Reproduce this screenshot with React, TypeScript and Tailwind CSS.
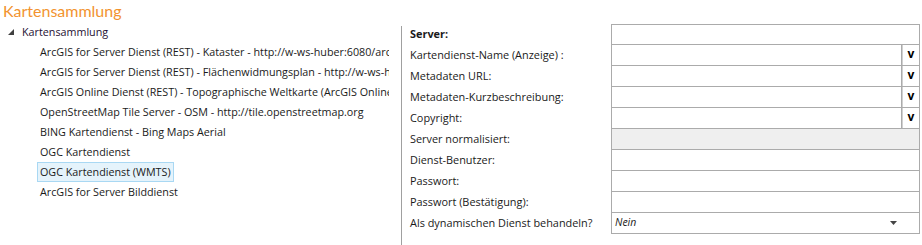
const services = [
  "ArcGIS for Server Dienst (REST) - Kataster - http://w-ws-huber:6080/arcgis/rest/services/Kataster/MapServer",
  "ArcGIS for Server Dienst (REST) - Flächenwidmungsplan - http://w-ws-huber:6080/arcgis/rest/services",
  "ArcGIS Online Dienst (REST) - Topographische Weltkarte (ArcGIS Online)",
  "OpenStreetMap Tile Server - OSM - http://tile.openstreetmap.org",
  "BING Kartendienst - Bing Maps Aerial",
  "OGC Kartendienst",
  "OGC Kartendienst (WMTS)",
  "ArcGIS for Server Bilddienst",
];

type Field = { label: string; kind: "text" | "combo" | "readonly" | "select"; bold?: boolean; value?: string };

const fields: Field[] = [
  { label: "Server:", kind: "text", bold: true },
  { label: "Kartendienst-Name (Anzeige) :", kind: "combo" },
  { label: "Metadaten URL:", kind: "combo" },
  { label: "Metadaten-Kurzbeschreibung:", kind: "combo" },
  { label: "Copyright:", kind: "combo" },
  { label: "Server normalisiert:", kind: "readonly" },
  { label: "Dienst-Benutzer:", kind: "text" },
  { label: "Passwort:", kind: "text" },
  { label: "Passwort (Bestätigung):", kind: "text" },
  { label: "Als dynamischen Dienst behandeln?", kind: "select", value: "Nein" },
];

const FieldInput = ({ field, first }: { field: Field; first: boolean }) => {
  const edge = `h-[21px] border-x border-b border-[#ababab] ${first ? "border-t" : ""}`;
  if (field.kind === "combo") {
    return (
      <div className={`${edge} flex w-[309px]`}>
        <div className="flex-1 border-r border-[#ababab] bg-white" />
        <div className="w-[17px] border-l border-[#d0d0d0] bg-white flex items-center justify-center text-[12px] font-bold text-black leading-none pb-[2px]">
          v
        </div>
      </div>
    );
  }
  if (field.kind === "select") {
    return (
      <div className={`${edge} flex w-[309px] items-center pl-[3px] pr-[24px] bg-white`}>
        <span className="flex-1 italic text-[10.5px] text-[#1a1a1a]">{field.value}</span>
        <svg width="7" height="4" viewBox="0 0 7 4" className="-mr-[2px]">
          <polygon points="0,0 7,0 3.5,4" fill="#444" />
        </svg>
      </div>
    );
  }
  return <div className={`${edge} w-[309px] ${field.kind === "readonly" ? "bg-[#efefef]" : "bg-white"}`} />;
};

export default function App() {
  return (
    <div
      className="w-[922px] h-[245px] bg-white overflow-hidden text-[#1a1a1a]"
      style={{ fontFamily: "'Segoe UI', 'Open Sans', sans-serif" }}
    >
      <div
        className="h-[22px] pl-[3px] text-[16px] leading-[22px] text-[#f2932f]"
        style={{ fontFamily: "Lato, 'Open Sans', sans-serif" }}
      >
        Kartensammlung
      </div>
      <div className="flex">
        {/* tree */}
        <div className="w-[389px] overflow-hidden text-[10.75px]">
          <div className="h-[20px] flex items-center">
            <svg width="6" height="6" viewBox="0 0 6 6" className="ml-[8px] mr-[8px]">
              <polygon points="6,0 6,6 0,6" fill="#404040" />
            </svg>
            <span className="text-[#1e0f32]">Kartensammlung</span>
          </div>
          {services.map((s, i) => (
            <div key={i} className="h-[20px] flex items-center pl-[37px]">
              <span
                className={`whitespace-nowrap px-[2px] h-[20px] leading-[18px] border ${
                  s === "OGC Kartendienst (WMTS)" ? "border-[#a9d8f3] bg-[#e5f3fb]" : "border-transparent"
                }`}
              >
                {s}
              </span>
            </div>
          ))}
        </div>
        <div className="w-[12px]" />
        <div className="w-px bg-[#a0a0a0] mt-[4px] h-[223px]" />
        {/* form */}
        <div className="pt-[2px] pl-[8px] text-[10.9px]">
          {fields.map((f, i) => (
            <div key={i} className="flex">
              <div className={`w-[201px] h-[21px] flex items-center whitespace-nowrap ${f.bold ? "font-bold" : ""}`}>
                {f.label}
              </div>
              <FieldInput field={f} first={i === 0} />
            </div>
          ))}
        </div>
      </div>
    </div>
  );
}
